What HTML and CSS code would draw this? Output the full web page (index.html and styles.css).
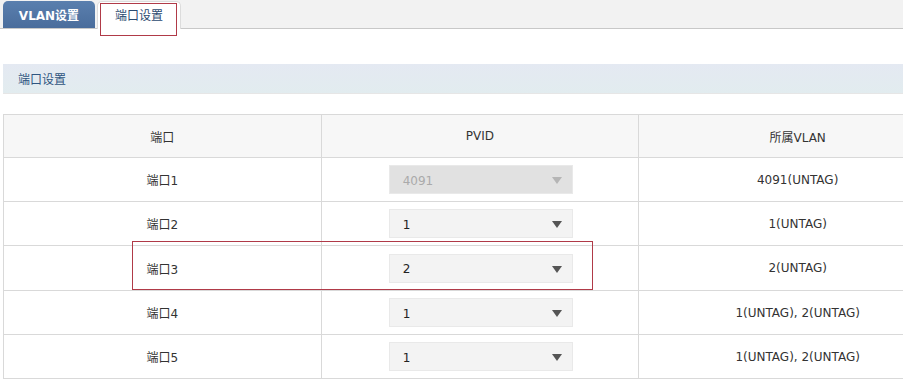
FILE: index.html
```html
<!DOCTYPE html>
<html>
<head>
    <meta charset="UTF-8">
    <title>端口设置</title>
    <link rel="stylesheet" href="styles.css">
</head>
<body>
    <div class="tab-bar">
        <div class="tab">VLAN设置</div>
        <div class="tab active">端口设置<span class="mark mark-tab"></span></div>
    </div>

    <div class="section-title">端口设置</div>

    <div class="table-wrap">
        <table class="port-table">
            <thead>
                <tr>
                    <th>端口</th>
                    <th>PVID</th>
                    <th>所属VLAN</th>
                </tr>
            </thead>
            <tbody>
                <tr>
                    <td>端口1</td>
                    <td><div class="select disabled"><span>4091</span><i class="arrow"></i></div></td>
                    <td>4091(UNTAG)</td>
                </tr>
                <tr>
                    <td>端口2</td>
                    <td><div class="select"><span>1</span><i class="arrow"></i></div></td>
                    <td>1(UNTAG)</td>
                </tr>
                <tr class="tall">
                    <td>端口3</td>
                    <td><div class="select"><span>2</span><i class="arrow"></i></div></td>
                    <td>2(UNTAG)</td>
                </tr>
                <tr>
                    <td>端口4</td>
                    <td><div class="select"><span>1</span><i class="arrow"></i></div></td>
                    <td>1(UNTAG), 2(UNTAG)</td>
                </tr>
                <tr>
                    <td>端口5</td>
                    <td><div class="select"><span>1</span><i class="arrow"></i></div></td>
                    <td>1(UNTAG), 2(UNTAG)</td>
                </tr>
            </tbody>
        </table>
        <span class="mark mark-row"></span>
    </div>
</body>
</html>
```

FILE: styles.css
```css
* {
    margin: 0;
    padding: 0;
    box-sizing: border-box;
}

body {
    font-family: "DejaVu Sans", "Noto Sans CJK SC", sans-serif;
    font-size: 12px;
    color: #333;
    background: #fff;
    width: 903px;
    height: 380px;
    overflow: hidden;
}

.tab-bar {
    height: 29px;
    background: #f2f2f2;
    border-bottom: 1px solid #c8c8c8;
    display: flex;
    align-items: flex-end;
    padding-left: 3px;
    gap: 2px;
}

.tab {
    height: 27px;
    width: 92px;
    border-radius: 5px 5px 0 0;
    background: linear-gradient(#5a7fae, #4a6d9c);
    color: #fff;
    font-weight: bold;
    font-size: 12px;
    display: flex;
    align-items: center;
    justify-content: center;
    position: relative;
}

.tab.active {
    width: 84px;
    height: 28px;
    margin-bottom: -1px;
    background: #fff;
    color: #2b4a70;
    font-weight: normal;
    border: 1px solid #dcdcdc;
    border-bottom: none;
    padding-bottom: 3px;
}

.section-title {
    margin: 35px 0 0 3px;
    height: 30px;
    background: linear-gradient(#e4e9f2, #e2ecef);
    border-bottom: 1px solid #e6e6e6;
    color: #2f5580;
    padding-left: 15px;
    display: flex;
    align-items: center;
}

.table-wrap {
    position: relative;
    margin: 20px 0 0 3px;
    width: 900px;
    overflow: hidden;
}

.port-table {
    width: 954px;
    border-collapse: collapse;
    table-layout: fixed;
}

.port-table th,
.port-table td {
    border: 1px solid #d9d9d9;
    text-align: center;
    font-weight: normal;
    color: #333;
    height: 44px;
}

.port-table th {
    background: #f7f7f7;
    height: 43px;
}

.port-table tr.tall td {
    height: 45px;
}

.select {
    width: 184px;
    height: 29px;
    margin: 0 auto 0 67px;
    background: #f3f3f3;
    border: 1px solid #e9e9e9;
    display: flex;
    align-items: center;
    justify-content: space-between;
    padding: 2px 10px 0 13px;
    color: #222;
}

.select.disabled {
    background: #e1e1e1;
    color: #aaa;
}

.arrow {
    width: 0;
    height: 0;
    border-left: 5px solid transparent;
    border-right: 5px solid transparent;
    border-top: 7px solid #555;
}

.select.disabled .arrow {
    border-top-color: #b5b5b5;
}

.mark {
    position: absolute;
    border: 1px solid #b03a48;
    pointer-events: none;
}

.mark-tab {
    left: 2px;
    top: 1px;
    width: 77px;
    height: 33px;
}

.mark-row {
    left: 129px;
    top: 127px;
    width: 461px;
    height: 49px;
}
```
